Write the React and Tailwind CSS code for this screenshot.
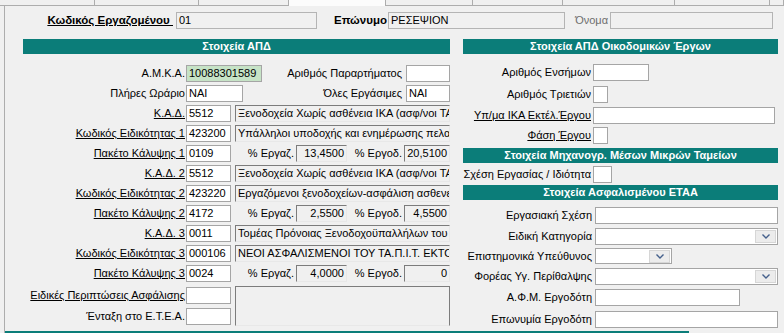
import React from "react";

const inpW = "h-[17px] border border-[#a5a5a5] bg-white px-[2px] leading-[15px] whitespace-nowrap overflow-hidden";
const inpRO = "h-[17px] border border-[#b4b4b4] bg-[#f0f0f0] px-[2px] leading-[15px] whitespace-nowrap overflow-hidden";
const sunk = "h-[17px] border border-t-[#7c7c7c] border-l-[#7c7c7c] border-r-[#e8e8e8] border-b-[#e8e8e8] bg-[#f0f0f0] px-[2px] leading-[15px] whitespace-nowrap overflow-hidden";
const head = "h-[15px] bg-[#0b7d79] text-white font-bold text-center leading-[15px] whitespace-nowrap overflow-hidden";

function Chevron() {
  return (
    <div className="ml-auto mr-[1px] h-[13px] w-[21px] border border-[#d6d6d6] bg-[#ececec] flex items-center justify-center">
      <svg width="8" height="5" viewBox="0 0 8 5">
        <path d="M0.5 0.5 L4 4 L7.5 0.5" fill="none" stroke="#44608c" strokeWidth="1.4" />
      </svg>
    </div>
  );
}

function LeftCodeRow({ label, code, desc }) {
  return (
    <div className="h-[20px] flex items-center">
      <div className="w-[162px] text-right underline whitespace-nowrap">{label}</div>
      <div className={`${inpW} ml-[1px] w-[45px]`}>{code}</div>
      <div className={`${sunk} ml-[4px] w-[215px]`}>{desc}</div>
    </div>
  );
}

function LeftPkgRow({ label, code, a, b }) {
  return (
    <div className="h-[20px] flex items-center">
      <div className="w-[162px] text-right underline whitespace-nowrap">{label}</div>
      <div className={`${inpW} ml-[1px] w-[45px]`}>{code}</div>
      <div className="w-[63px] text-right whitespace-nowrap">% Εργαζ.</div>
      <div className={`${sunk} ml-[2px] w-[51px] text-right`}>{a}</div>
      <div className="w-[55px] text-right whitespace-nowrap">% Εργοδ.</div>
      <div className={`${sunk} ml-[2px] w-[46px] text-right`}>{b}</div>
    </div>
  );
}

export default function App() {
  const tabs = [
    { w: "w-[95px]", sel: false },
    { w: "w-[104px]", sel: false },
    { w: "w-[90px]", sel: false },
    { w: "w-[97px]", sel: true },
    { w: "w-[87px]", sel: false },
    { w: "w-[90px]", sel: false },
    { w: "w-[112px]", sel: false },
    { w: "w-[95px]", sel: false },
    { w: "w-[14px]", sel: false },
  ];
  return (
    <div className="w-[784px] h-[333px] overflow-hidden bg-[#f0f0f0] font-['Liberation_Sans',Arial,sans-serif] text-[11px] text-black flex flex-col">
      <div className="h-[6px] flex shrink-0">
        {tabs.map((t, i) => (
          <div
            key={i}
            className={`${t.w} h-[6px] shrink-0 ${t.sel ? "bg-[#fcfcfc] border-r border-[#adadad]" : "bg-[#f0f0f0] border-r border-b border-[#adadad]"}`}
          />
        ))}
      </div>
      <div className="ml-[4px] flex-1 border-l border-[#adadad] flex flex-col">
        {/* top row */}
        <div className="mt-[6px] h-[17px] flex items-center">
          <div className="w-[168px] text-right text-[11.5px] font-bold underline whitespace-nowrap">Κωδικός Εργαζομένου&nbsp;</div>
          <div className={`${inpRO} ml-[3px] w-[141px]`}>01</div>
          <div className="w-[70px] text-right text-[11.5px] font-bold whitespace-nowrap">Επώνυμο</div>
          <div className={`${inpRO} ml-[1px] w-[177px]`}>ΡΕΣΕΨΙΟΝ</div>
          <div className="w-[43px] text-right text-[#6e6e6e] whitespace-nowrap">Όνομα</div>
          <div className={`${inpRO} ml-[2px] w-[163px]`}></div>
        </div>

        <div className="mt-[10px] h-[292px] flex">
          {/* left column */}
          <div className="ml-[18px] w-[427px] flex flex-col">
            <div className={head}>Στοιχεία ΑΠΔ</div>
            <div className="mt-[9px] flex flex-col">
              <div className="h-[20px] flex items-center">
                <div className="w-[162px] text-right whitespace-nowrap">Α.Μ.Κ.Α.</div>
                <div className="h-[17px] ml-[1px] w-[76px] border border-[#a5a5a5] bg-[#c6e3c6] px-[2px] leading-[15px]">10088301589</div>
                <div className="flex-1 text-right whitespace-nowrap">Αριθμός Παραρτήματος</div>
                <div className={`${inpW} ml-[4px] w-[44px]`}></div>
              </div>
              <div className="h-[20px] flex items-center">
                <div className="w-[162px] text-right whitespace-nowrap">Πλήρες Ωράριο</div>
                <div className={`${inpW} ml-[1px] w-[57px]`}>ΝΑΙ</div>
                <div className="flex-1 text-right whitespace-nowrap">Όλες Εργάσιμες</div>
                <div className={`${inpW} ml-[4px] w-[44px]`}>ΝΑΙ</div>
              </div>
              <LeftCodeRow label="Κ.Α.Δ." code="5512" desc="Ξενοδοχεία Χωρίς ασθένεια ΙΚΑ (ασφ/νοι ΤΑΞΥ)" />
              <LeftCodeRow label="Κωδικός Ειδικότητας 1" code="423200" desc="Υπάλληλοι υποδοχής και ενημέρωσης πελατών" />
              <LeftPkgRow label="Πακέτο Κάλυψης 1" code="0109" a="13,4500" b="20,5100" />
              <LeftCodeRow label="Κ.Α.Δ. 2" code="5512" desc="Ξενοδοχεία Χωρίς ασθένεια ΙΚΑ (ασφ/νοι ΤΑΞΥ)" />
              <LeftCodeRow label="Κωδικός Ειδικότητας 2" code="423220" desc="Εργαζόμενοι ξενοδοχείων-ασφάλιση ασθενείας" />
              <LeftPkgRow label="Πακέτο Κάλυψης 2" code="4172" a="2,5500" b="4,5500" />
              <LeftCodeRow label="Κ.Α.Δ. 3" code="0011" desc="Τομέας Πρόνοιας Ξενοδοχοϋπαλλήλων του ΤΑΞΥ" />
              <LeftCodeRow label="Κωδικός Ειδικότητας 3" code="000106" desc="ΝΕΟΙ ΑΣΦΑΛΙΣΜΕΝΟΙ ΤΟΥ ΤΑ.Π.Ι.Τ. ΕΚΤΟΣ ΤΗΣ" />
              <LeftPkgRow label="Πακέτο Κάλυψης 3" code="0024" a="4,0000" b="0" />
              <div className="mt-[2px] flex">
                <div className="flex flex-col">
                  <div className="h-[20px] flex items-center">
                    <div className="w-[162px] text-right underline whitespace-nowrap">Ειδικές Περιπτώσεις Ασφάλισης</div>
                    <div className={`${inpW} ml-[1px] w-[45px]`}></div>
                  </div>
                  <div className="mt-[1px] h-[20px] flex items-center">
                    <div className="w-[162px] text-right whitespace-nowrap">Ένταξη στο Ε.Τ.Ε.Α.</div>
                    <div className={`${inpW} ml-[1px] w-[45px]`}></div>
                  </div>
                </div>
                <div className="ml-[4px] mt-[1px] w-[216px] h-[40px] border border-t-[#7c7c7c] border-l-[#7c7c7c] border-r-[#7c7c7c] border-b-[#e8e8e8] bg-[#f0f0f0]"></div>
              </div>
            </div>
          </div>

          {/* right column */}
          <div className="w-[334px] flex flex-col">
            <div className={`${head} ml-[13px] w-[315px]`}>Στοιχεία ΑΠΔ Οικοδομικών Έργων</div>
            <div className="mt-[7px] h-[22px] flex items-center">
              <div className="w-[141px] text-right whitespace-nowrap">Αριθμός Ενσήμων</div>
              <div className={`${inpW} ml-[2px] w-[56px]`}></div>
            </div>
            <div className="h-[22px] flex items-center">
              <div className="w-[141px] text-right whitespace-nowrap">Αριθμός Τριετιών</div>
              <div className={`${inpW} ml-[2px] w-[15px]`}></div>
            </div>
            <div className="h-[20px] flex items-center">
              <div className="w-[141px] text-right underline whitespace-nowrap">Υπ/μα ΙΚΑ Εκτέλ.Έργου</div>
              <div className={`${inpW} ml-[2px] w-[182px]`}></div>
            </div>
            <div className="h-[20px] flex items-center">
              <div className="w-[141px] text-right underline whitespace-nowrap">Φάση Έργου</div>
              <div className={`${inpW} ml-[2px] w-[15px]`}></div>
            </div>
            <div className={`${head} mt-[3px] ml-[13px] w-[315px]`}>Στοιχεία Μηχανογρ. Μέσων Μικρών Ταμείων</div>
            <div className="mt-[1px] h-[20px] flex items-center">
              <div className="w-[141px] text-right whitespace-nowrap">Σχέση Εργασίας / Ιδιότητα</div>
              <div className={`${inpW} ml-[2px] w-[19px]`}></div>
            </div>
            <div className={`${head} mt-[1px] ml-[13px] w-[315px]`}>Στοιχεία Ασφαλισμένου ΕΤΑΑ</div>
            <div className="mt-[5px] h-[20px] flex items-center">
              <div className="w-[142px] text-right whitespace-nowrap">Εργασιακή Σχέση</div>
              <div className={`${inpW} ml-[3px] w-[183px]`}></div>
            </div>
            <div className="h-[22px] flex items-center">
              <div className="w-[142px] text-right whitespace-nowrap">Ειδική Κατηγορία</div>
              <div className="ml-[3px] w-[183px] h-[17px] border border-[#a5a5a5] bg-white flex items-center"><Chevron /></div>
            </div>
            <div className="h-[18px] flex items-center">
              <div className="w-[142px] text-right whitespace-nowrap">Επιστημονικά Υπεύθυνος</div>
              <div className="ml-[3px] w-[77px] h-[16px] border border-[#a5a5a5] bg-white flex items-center"><Chevron /></div>
            </div>
            <div className="h-[22px] flex items-center">
              <div className="w-[142px] text-right whitespace-nowrap">Φορέας Υγ. Περίθαλψης</div>
              <div className="ml-[3px] w-[183px] h-[17px] border border-[#a5a5a5] bg-white flex items-center"><Chevron /></div>
            </div>
            <div className="h-[21px] flex items-center">
              <div className="w-[142px] text-right whitespace-nowrap">Α.Φ.Μ. Εργοδότη</div>
              <div className={`${inpW} ml-[3px] w-[145px]`}></div>
            </div>
            <div className="h-[22px] flex items-center">
              <div className="w-[142px] text-right whitespace-nowrap">Επωνυμία Εργοδότη</div>
              <div className={`${inpW} ml-[3px] w-[183px]`}></div>
            </div>
          </div>
        </div>
        <div className="mt-auto h-[2px] w-[684px] bg-[#0b7d79] shrink-0"></div>
      </div>
    </div>
  );
}
